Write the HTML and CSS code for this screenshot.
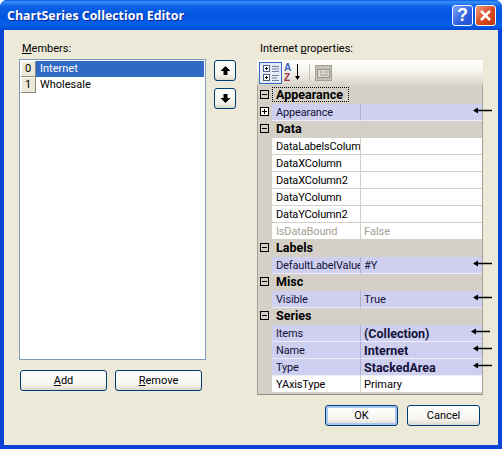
FILE: index.html
```html
<!DOCTYPE html>
<html lang="en">
<head>
    <meta charset="UTF-8">
    <title>ChartSeries Collection Editor</title>
    <link rel="stylesheet" href="styles.css">
</head>
<body>
    <svg class="defs" width="0" height="0">
        <filter id="soft" x="-20%" y="-100%" width="140%" height="300%">
            <feGaussianBlur stdDeviation="1"/>
        </filter>
        <symbol id="note-arrow" viewBox="0 0 30 12">
            <path d="M7 7h21" stroke="#55556a" stroke-width="2.500" opacity=".6" filter="url(#soft)"/>
            <path d="M5 3.500h15" stroke="#000" stroke-width="1.500"/>
            <path d="M1 3.500l5-3v6z" fill="#000"/>
        </symbol>
    </svg>
    <div class="window">
        <header class="titlebar">
            <span class="title">ChartSeries Collection Editor</span>
            <span class="capbtn help">?</span>
            <span class="capbtn close">
                <svg width="13" height="13" viewBox="0 0 13 13"><path d="M2 2l9 9M11 2l-9 9" stroke="#fff" stroke-width="2.600"/></svg>
            </span>
        </header>
        <main class="client">
            <section class="members">
                <label class="caption"><u>M</u>embers:</label>
                <div class="list-area">
                    <div class="listbox">
                        <div class="item selected"><span class="idx">0</span><span class="name">Internet</span></div>
                        <div class="item"><span class="idx">1</span><span class="name">Wholesale</span></div>
                    </div>
                    <div class="move-btns">
                        <button class="btn move">
                            <svg width="11" height="11" viewBox="0 0 11 11"><path d="M5.500 1L10.500 6H7.500V10H3.500V6H.5z" fill="#000"/></svg>
                        </button>
                        <button class="btn move">
                            <svg width="11" height="11" viewBox="0 0 11 11"><path d="M5.500 10L10.500 5H7.500V1H3.500V5H.5z" fill="#000"/></svg>
                        </button>
                    </div>
                </div>
                <div class="list-actions">
                    <button class="btn wide"><u>A</u>dd</button>
                    <button class="btn wide"><u>R</u>emove</button>
                </div>
            </section>
            <section class="props">
                <label class="caption">Internet <u>p</u>roperties:</label>
                <div class="toolbar">
                    <span class="tool active">
                        <svg width="18" height="18" viewBox="0 0 18 18">
                            <rect x="1.500" y="1.500" width="6" height="6" fill="#fff" stroke="#4a5a80"/>
                            <path d="M3 4.500h3M4.500 3v3" stroke="#000"/>
                            <rect x="1.500" y="10.500" width="6" height="6" fill="#fff" stroke="#4a5a80"/>
                            <path d="M3 13.500h3M4.500 12v3" stroke="#000"/>
                            <path d="M10 2.500h7M10 5h7M10 7.500h7M10 11.500h7M10 14h5M10 16.500h7" stroke="#6f7f9f"/>
                        </svg>
                    </span>
                    <span class="tool sort">
                        <svg width="20" height="20" viewBox="0 0 20 20">
                            <text x="0" y="8" class="az az-a">A</text>
                            <text x="0" y="18" class="az az-z">Z</text>
                            <path d="M13.500 1v13" stroke="#000"/>
                            <path d="M11 13h5l-2.500 4z" fill="#000"/>
                        </svg>
                    </span>
                    <span class="tool-sep"></span>
                    <span class="tool">
                        <svg width="18" height="16" viewBox="0 0 18 16">
                            <rect x=".5" y=".5" width="16" height="15" fill="#c4c1b6" stroke="#a3a095"/>
                            <rect x="2.500" y="4.500" width="12" height="8" fill="#dedbd0" stroke="#96938a"/>
                            <path d="M5 7h2M9 7h4M5 10h8" stroke="#96938a"/>
                        </svg>
                    </span>
                </div>
                <div class="grid">
                    <div class="group"><span class="toggle"></span><span class="group-name focus">Appearance</span></div>
                    <div class="row mark"><span class="toggle plus"></span><span class="key">Appearance</span><span class="val"></span><svg class="arrow"><use href="#note-arrow"/></svg></div>
                    <div class="group"><span class="toggle"></span><span class="group-name">Data</span></div>
                    <div class="row"><span class="key">DataLabelsColumn</span><span class="val"></span></div>
                    <div class="row"><span class="key">DataXColumn</span><span class="val"></span></div>
                    <div class="row"><span class="key">DataXColumn2</span><span class="val"></span></div>
                    <div class="row"><span class="key">DataYColumn</span><span class="val"></span></div>
                    <div class="row"><span class="key">DataYColumn2</span><span class="val"></span></div>
                    <div class="row off"><span class="key">IsDataBound</span><span class="val">False</span></div>
                    <div class="group"><span class="toggle"></span><span class="group-name">Labels</span></div>
                    <div class="row mark"><span class="key">DefaultLabelValue</span><span class="val">#Y</span><svg class="arrow"><use href="#note-arrow"/></svg></div>
                    <div class="group"><span class="toggle"></span><span class="group-name">Misc</span></div>
                    <div class="row mark"><span class="key">Visible</span><span class="val">True</span><svg class="arrow"><use href="#note-arrow"/></svg></div>
                    <div class="group"><span class="toggle"></span><span class="group-name">Series</span></div>
                    <div class="row mark"><span class="key">Items</span><span class="val strong">(Collection)</span><svg class="arrow left"><use href="#note-arrow"/></svg></div>
                    <div class="row mark"><span class="key">Name</span><span class="val strong">Internet</span><svg class="arrow"><use href="#note-arrow"/></svg></div>
                    <div class="row mark"><span class="key">Type</span><span class="val strong">StackedArea</span><svg class="arrow"><use href="#note-arrow"/></svg></div>
                    <div class="row"><span class="key">YAxisType</span><span class="val">Primary</span></div>
                </div>
                <div class="dialog-actions">
                    <button class="btn dialog default">OK</button>
                    <button class="btn dialog">Cancel</button>
                </div>
            </section>
        </main>
    </div>
</body>
</html>
```

FILE: styles.css
```css
html, body {
    margin: 0;
    padding: 0;
    background: #fff;
}
body {
    width: 502px;
    height: 449px;
    overflow: hidden;
    font-family: Roboto, "Noto Sans", sans-serif;
    font-size: 11px;
    color: #000;
}
.defs {
    display: block;
    height: 0;
}
.window {
    width: 502px;
    height: 449px;
    box-sizing: border-box;
    display: flex;
    flex-direction: column;
    background: #0a45d8;
    border-radius: 7px 7px 0 0;
    overflow: hidden;
}
.titlebar {
    height: 30px;
    flex: none;
    display: flex;
    align-items: center;
    gap: 2px;
    padding: 0 6px 0 7px;
    background: linear-gradient(#0a5ee6 0, #3a8ff5 2px, #0b62e8 6px, #0353e0 16px, #0660ea 25px, #0349d4 30px);
}
.title {
    flex: 1;
    color: #fff;
    font-family: "Open Sans", "Noto Sans", sans-serif;
    font-size: 12.4px;
    font-weight: 700;
    text-shadow: 1px 1px 0 #0a2a9a;
}
.capbtn {
    width: 21px;
    height: 21px;
    box-sizing: border-box;
    border: 1px solid #fff;
    border-radius: 3px;
    display: flex;
    align-items: center;
    justify-content: center;
    color: #fff;
}
.help {
    background: linear-gradient(135deg, #7fa4f4, #2c5fe0 60%, #2350d0);
    font-family: "Liberation Sans", sans-serif;
    font-size: 18px;
    font-weight: 700;
}
.close {
    background: linear-gradient(135deg, #f0a080, #d9481c 55%, #c03a10);
}
.client {
    flex: none;
    height: 415px;
    margin: 0 4px;
    box-sizing: border-box;
    padding: 12px 15px 0;
    display: flex;
    background: #ece9d8;
}
.caption {
    display: block;
    height: 17px;
    padding-left: 3px;
    line-height: 14px;
}
.members {
    width: 238px;
    flex: none;
}
.list-area {
    display: flex;
    gap: 8px;
    height: 301px;
}
.listbox {
    width: 187px;
    box-sizing: border-box;
    padding: 1px;
    background: #fff;
    border: 1px solid #7f9db9;
}
.item {
    display: flex;
    height: 16px;
}
.idx {
    width: 15px;
    flex: none;
    box-sizing: border-box;
    text-align: center;
    line-height: 15px;
    background: #ece9d8;
    border-right: 1px solid #8c8a7c;
    border-bottom: 1px solid #8c8a7c;
    box-shadow: inset 1px 1px 0 #fff;
}
.name {
    flex: 1;
    padding-left: 4px;
    line-height: 15px;
}
.selected .name {
    background: #316ac5;
    color: #fff;
}
.move-btns {
    display: flex;
    flex-direction: column;
    gap: 7px;
    padding-top: 1px;
}
.btn {
    box-sizing: border-box;
    padding: 0;
    font: inherit;
    color: #000;
    background: linear-gradient(#fff, #f5f4ee 70%, #dcd8cc);
    border: 1px solid #003c74;
    border-radius: 3px;
    display: flex;
    align-items: center;
    justify-content: center;
}
.move {
    width: 22px;
    height: 21px;
}
.list-actions {
    display: flex;
    gap: 8px;
    margin: 10px 0 0 1px;
}
.wide {
    width: 87px;
    height: 21px;
}
.props {
    width: 226px;
    flex: none;
}
.toolbar {
    height: 25px;
    margin-top: 1px;
    display: flex;
    align-items: center;
    padding-left: 2px;
    box-sizing: border-box;
    background: linear-gradient(#fff, #f7f6f0 40%, #d8d5c8);
}
.tool {
    width: 23px;
    height: 22px;
    box-sizing: border-box;
    display: flex;
    align-items: center;
    justify-content: center;
}
.tool.active {
    background: #e6ebf5;
    border: 1px solid #316ac5;
}
.sort {
    margin-left: 2px;
    justify-content: flex-start;
}
.tool-sep {
    width: 1px;
    height: 17px;
    margin: 0 2px;
    background: #c4c1b4;
}
.az {
    font-family: "Liberation Sans", sans-serif;
    font-size: 10px;
    font-weight: 700;
}
.az-a {
    fill: #3a5fb0;
}
.az-z {
    fill: #a03040;
}
.grid {
    box-sizing: border-box;
    height: 310px;
    padding: 2px 0 0;
    background: #d4d0c8;
    border-left: 1px solid #a5a295;
    border-right: 1px solid #a5a295;
    border-bottom: 1px solid #8f8c80;
}
.group, .row {
    height: 17px;
    display: flex;
    position: relative;
    box-sizing: border-box;
}
.group {
    line-height: 16px;
    font-weight: 700;
}
.toggle {
    width: 14px;
    flex: none;
    position: relative;
}
.group .toggle::before, .plus::before {
    content: "";
    position: absolute;
    left: 2px;
    top: 3px;
    width: 9px;
    height: 9px;
    box-sizing: border-box;
    border: 1px solid #000;
    background: linear-gradient(#000, #000) center / 5px 1px no-repeat;
}
.plus::before {
    background: linear-gradient(#000, #000) center / 5px 1px no-repeat, linear-gradient(#000, #000) center / 1px 5px no-repeat, #fff;
}
.group-name {
    padding-left: 4px;
    height: 15px;
    font-size: 12.5px;
}
.focus {
    width: 77px;
    box-sizing: border-box;
    outline: 1px dotted #000;
    outline-offset: -1px;
}
.row {
    padding-left: 14px;
    line-height: 17px;
}
.row .toggle {
    margin-left: -14px;
}
.key {
    width: 89px;
    flex: none;
    box-sizing: border-box;
    padding-left: 4px;
    overflow: hidden;
    white-space: nowrap;
    letter-spacing: -.15px;
    background: #fff;
    border-right: 1px solid #d4d0c8;
    border-bottom: 1px solid #d4d0c8;
}
.val {
    flex: 1;
    padding-left: 3px;
    background: #fff;
    border-bottom: 1px solid #d4d0c8;
}
.mark .key, .mark .val {
    background: #cfcff0;
    color: #12123a;
    border-bottom-color: #eeeef8;
}
.mark .key {
    border-right-color: #b0aed0;
}
.off .key, .off .val {
    color: #a3a095;
}
.strong {
    font-weight: 700;
    font-size: 12.5px;
}
.arrow {
    position: absolute;
    left: 214px;
    top: 3px;
    width: 30px;
    height: 12px;
}
.arrow.left {
    left: 212px;
}
.dialog-actions {
    display: flex;
    justify-content: flex-end;
    gap: 9px;
    margin: 10px 3px 0 0;
}
.dialog {
    width: 73px;
    height: 21px;
}
.default {
    box-shadow: inset 0 0 0 2px #a9c4ee;
}
```
